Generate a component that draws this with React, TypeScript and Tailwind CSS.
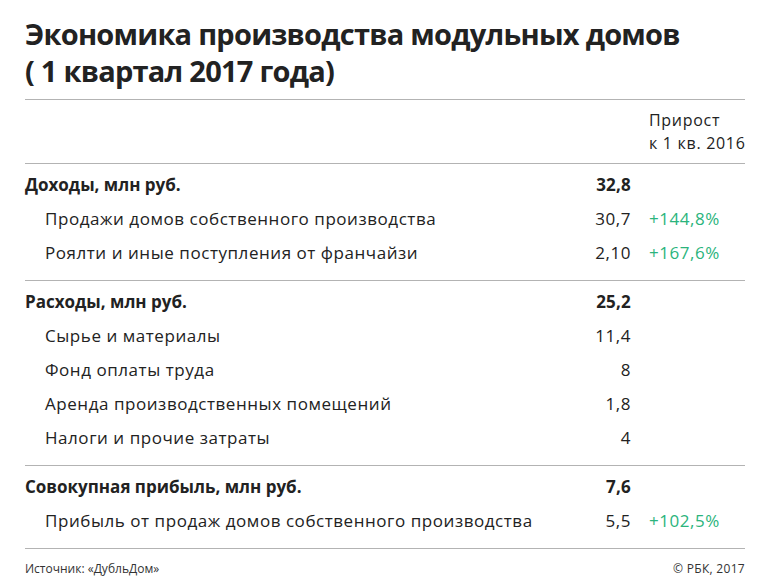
import React from "react";

type Row = { label: string; value: string; growth?: string; bold?: boolean };

const sections: Row[][] = [
  [
    { label: "Доходы, млн руб.", value: "32,8", bold: true },
    { label: "Продажи домов собственного производства", value: "30,7", growth: "+144,8%" },
    { label: "Роялти и иные поступления от франчайзи", value: "2,10", growth: "+167,6%" },
  ],
  [
    { label: "Расходы, млн руб.", value: "25,2", bold: true },
    { label: "Сырье и материалы", value: "11,4" },
    { label: "Фонд оплаты труда", value: "8" },
    { label: "Аренда производственных помещений", value: "1,8" },
    { label: "Налоги и прочие затраты", value: "4" },
  ],
  [
    { label: "Совокупная прибыль, млн руб.", value: "7,6", bold: true },
    { label: "Прибыль от продаж домов собственного производства", value: "5,5", growth: "+102,5%" },
  ],
];

function TableRow({ row }: { row: Row }) {
  return (
    <div className="flex items-center h-[34px]">
      <div className={row.bold ? "flex-1 font-bold tracking-[0px]" : "flex-1 pl-[20px]"}>
        {row.label}
      </div>
      <div className={row.bold ? "w-[80px] text-right font-bold tracking-[0.2px]" : "w-[80px] text-right"}>
        {row.value}
      </div>
      <div className="w-[96px] ml-[18px] text-[#2bb47c]">{row.growth}</div>
    </div>
  );
}

export default function App() {
  return (
    <div
      className="w-[770px] h-[584px] bg-white text-[#222] px-[25px] pt-[15px]"
      style={{ fontFamily: "'Open Sans', Roboto, sans-serif" }}
    >
      {/* Title */}
      <h1 className="text-[29px] leading-[37px] font-bold tracking-[-0.75px] pb-[10px]">
        Экономика производства модульных домов
        <br />( 1 квартал 2017 года)
      </h1>

      <div className="border-t border-[#b3b3b3]" />

      {/* Header */}
      <div className="flex h-[63px] items-center text-[16px] leading-[23px] tracking-[0.7px]">
        <div className="flex-1" />
        <div className="w-[96px] pt-[1px] whitespace-nowrap">
          Прирост
          <br />к 1 кв. 2016
        </div>
      </div>

      {sections.map((rows, i) => (
        <div
          key={i}
          className="border-t border-[#b3b3b3] pt-[4px] pb-[10px] text-[17px] tracking-[0.55px]"
        >
          {rows.map((row) => (
            <TableRow key={row.label} row={row} />
          ))}
        </div>
      ))}

      {/* Footer */}
      <div className="border-t border-[#b3b3b3] flex justify-between pt-[11px] text-[12px] text-[#333]">
        <span>Источник: «ДубльДом»</span>
        <span className="tracking-[0.3px]">© РБК, 2017</span>
      </div>
    </div>
  );
}
